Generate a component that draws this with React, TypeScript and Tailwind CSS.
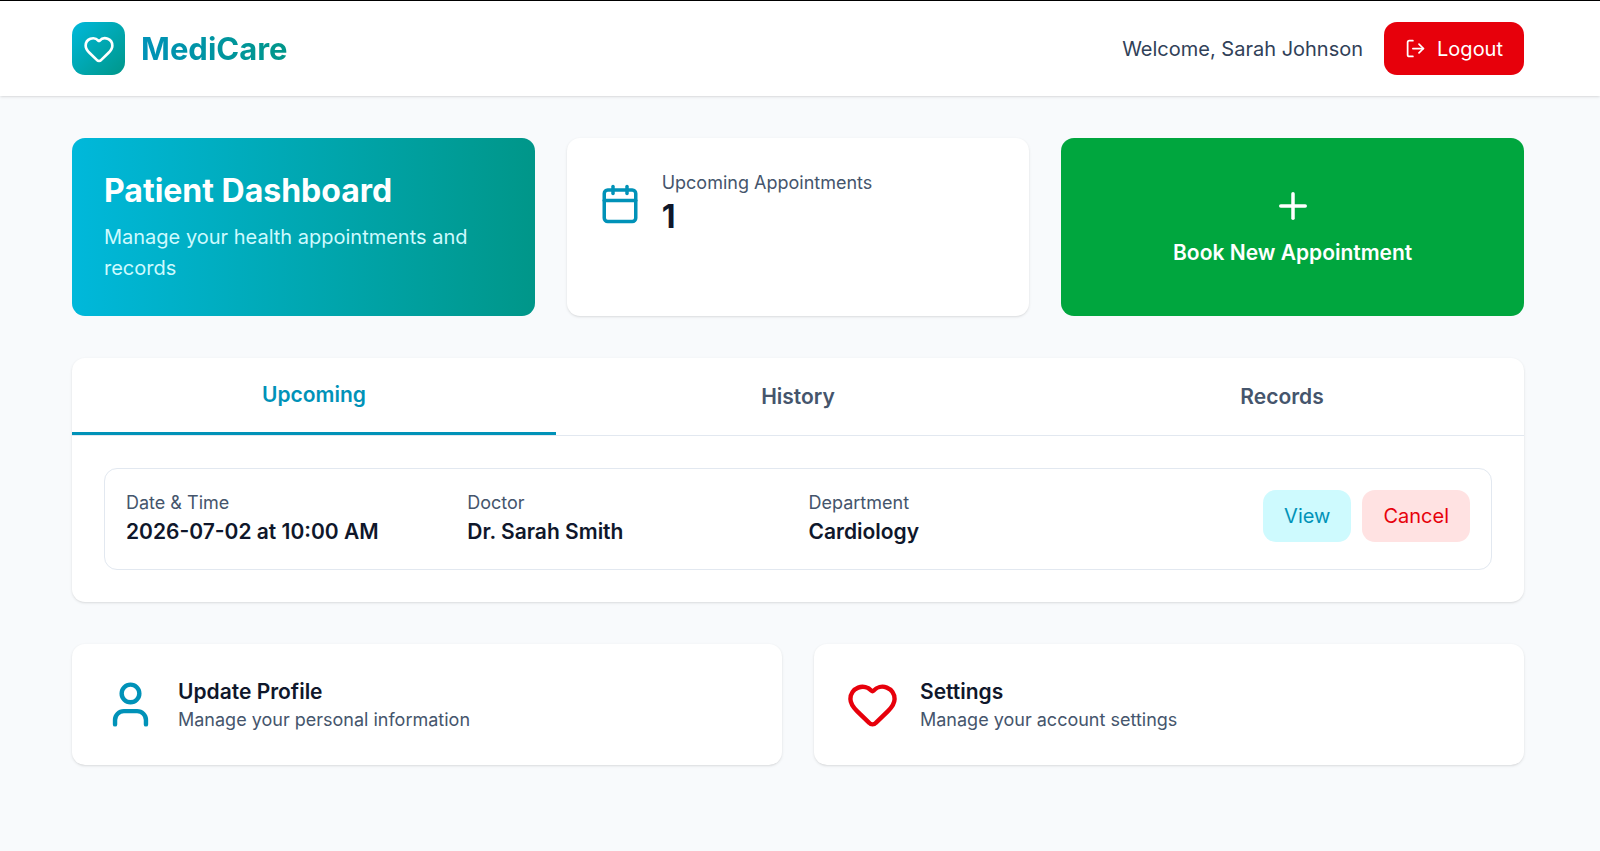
import { useState } from 'react'
import { Calendar, Heart, LogOut, Plus, User } from 'lucide-react'
import type { LucideIcon } from 'lucide-react'
import clsx from 'clsx'

type Tab = 'upcoming' | 'history' | 'records'

interface Appointment {
    id: number
    date: string
    time: string
    doctor: string
    department: string
}

const tabs: { id: Tab; label: string }[] = [
    { id: 'upcoming', label: 'Upcoming' },
    { id: 'history', label: 'History' },
    { id: 'records', label: 'Records' },
]

const appointments: Appointment[] = [
    { id: 1, date: '2026-07-02', time: '10:00 AM', doctor: 'Dr. Sarah Smith', department: 'Cardiology' },
]

function Header({ name }: { name: string }) {
    return (
        <header className="bg-white border-t border-t-black shadow-sm">
            <div className="flex items-center justify-between pl-[72px] pr-[76px] py-[21px]">
                <div className="flex items-center gap-4">
                    <div className="size-[53px] rounded-[13px] bg-linear-to-br from-cyan-500 to-teal-600 flex items-center justify-center">
                        <Heart className="size-8 text-white" />
                    </div>
                    <span className="text-[31px] leading-[42px] font-bold bg-linear-to-r from-cyan-600 to-teal-600 bg-clip-text text-transparent">
                        MediCare
                    </span>
                </div>
                <div className="flex items-center gap-[21px]">
                    <span className="text-xl leading-8 text-slate-700">Welcome, {name}</span>
                    <button className="h-[53px] px-[21px] flex items-center gap-[11px] rounded-[13px] bg-red-600 hover:bg-red-700 text-white text-xl leading-8">
                        <LogOut className="size-[21px]" />
                        Logout
                    </button>
                </div>
            </div>
        </header>
    )
}

function Field({ label, value }: { label: string; value: string }) {
    return (
        <div>
            <p className="text-lg leading-[26px] text-slate-600">{label}</p>
            <p className="text-[21px] leading-8 font-semibold text-slate-900">{value}</p>
        </div>
    )
}

function AppointmentRow({ appointment }: { appointment: Appointment }) {
    return (
        <div className="border border-slate-200 rounded-[13px] p-[21px] grid md:grid-cols-4 gap-[21px]">
            <Field label="Date & Time" value={`${appointment.date} at ${appointment.time}`} />
            <Field label="Doctor" value={appointment.doctor} />
            <Field label="Department" value={appointment.department} />
            <div className="flex items-start md:justify-end gap-[11px]">
                <button className="px-[21px] py-[10px] rounded-[13px] bg-cyan-100 hover:bg-cyan-200 text-cyan-600 text-xl leading-8">
                    View
                </button>
                <button className="px-[21px] py-[10px] rounded-[13px] bg-red-100 hover:bg-red-200 text-red-600 text-xl leading-8">
                    Cancel
                </button>
            </div>
        </div>
    )
}

interface ActionCardProps {
    icon: LucideIcon
    iconClass: string
    title: string
    text: string
}

function ActionCard({ icon: Icon, iconClass, title, text }: ActionCardProps) {
    return (
        <button className="bg-white rounded-[13px] shadow-sm hover:shadow-md p-8 flex items-center gap-[21px] text-left">
            <Icon className={clsx('size-[53px] shrink-0', iconClass)} />
            <span>
                <span className="block text-[21px] leading-[31px] font-semibold text-slate-900">{title}</span>
                <span className="block text-lg leading-[26px] text-slate-600">{text}</span>
            </span>
        </button>
    )
}

export default function App() {
    const [activeTab, setActiveTab] = useState<Tab>('upcoming')
    const rows = activeTab === 'upcoming' ? appointments : []

    return (
        <div className="min-h-screen bg-slate-50 font-['Inter','Liberation_Sans',sans-serif]">
            <Header name="Sarah Johnson" />

            <main className="pl-[72px] pr-[76px] py-[42px] flex flex-col gap-[42px]">
                {/* Overview */}
                <section className="grid md:grid-cols-3 gap-8">
                    <div className="rounded-[13px] bg-linear-to-r from-cyan-500 to-teal-600 p-8">
                        <h1 className="text-[32px] leading-[42px] font-bold text-white mb-[10px]">Patient Dashboard</h1>
                        <p className="text-xl leading-[31px] text-cyan-100">Manage your health appointments and records</p>
                    </div>

                    <div className="bg-white rounded-[13px] shadow-sm p-8">
                        <div className="flex items-center gap-[21px]">
                            <Calendar className="size-[42px] text-cyan-600" />
                            <div>
                                <p className="text-lg leading-[26px] text-slate-600">Upcoming Appointments</p>
                                <p className="text-[32px] leading-[42px] font-bold text-slate-900">{appointments.length}</p>
                            </div>
                        </div>
                    </div>

                    <button className="rounded-[13px] bg-green-600 hover:bg-green-700 text-white p-8 flex flex-col items-center justify-center gap-[10px]">
                        <Plus className="size-[42px]" />
                        <span className="text-[21px] leading-8 font-semibold">Book New Appointment</span>
                    </button>
                </section>

                {/* Tabs */}
                <section className="bg-white rounded-[13px] shadow-sm">
                    <div className="flex border-b border-slate-200">
                        {tabs.map(tab => (
                            <button
                                key={tab.id}
                                onClick={() => setActiveTab(tab.id)}
                                className={clsx(
                                    'flex-1 py-[21px] text-[21px] leading-8 font-semibold',
                                    activeTab === tab.id
                                        ? 'text-cyan-600 border-b-3 border-cyan-600'
                                        : 'text-slate-600 hover:text-slate-900'
                                )}
                            >
                                {tab.label}
                            </button>
                        ))}
                    </div>
                    <div className="p-8 flex flex-col gap-[21px]">
                        {rows.map(a => (
                            <AppointmentRow key={a.id} appointment={a} />
                        ))}
                        {rows.length === 0 && (
                            <p className="text-xl leading-8 text-center text-slate-600">Nothing here yet</p>
                        )}
                    </div>
                </section>

                {/* Quick actions */}
                <section className="grid md:grid-cols-2 gap-8">
                    <ActionCard
                        icon={User}
                        iconClass="text-cyan-600"
                        title="Update Profile"
                        text="Manage your personal information"
                    />
                    <ActionCard
                        icon={Heart}
                        iconClass="text-red-600"
                        title="Settings"
                        text="Manage your account settings"
                    />
                </section>
            </main>
        </div>
    )
}
